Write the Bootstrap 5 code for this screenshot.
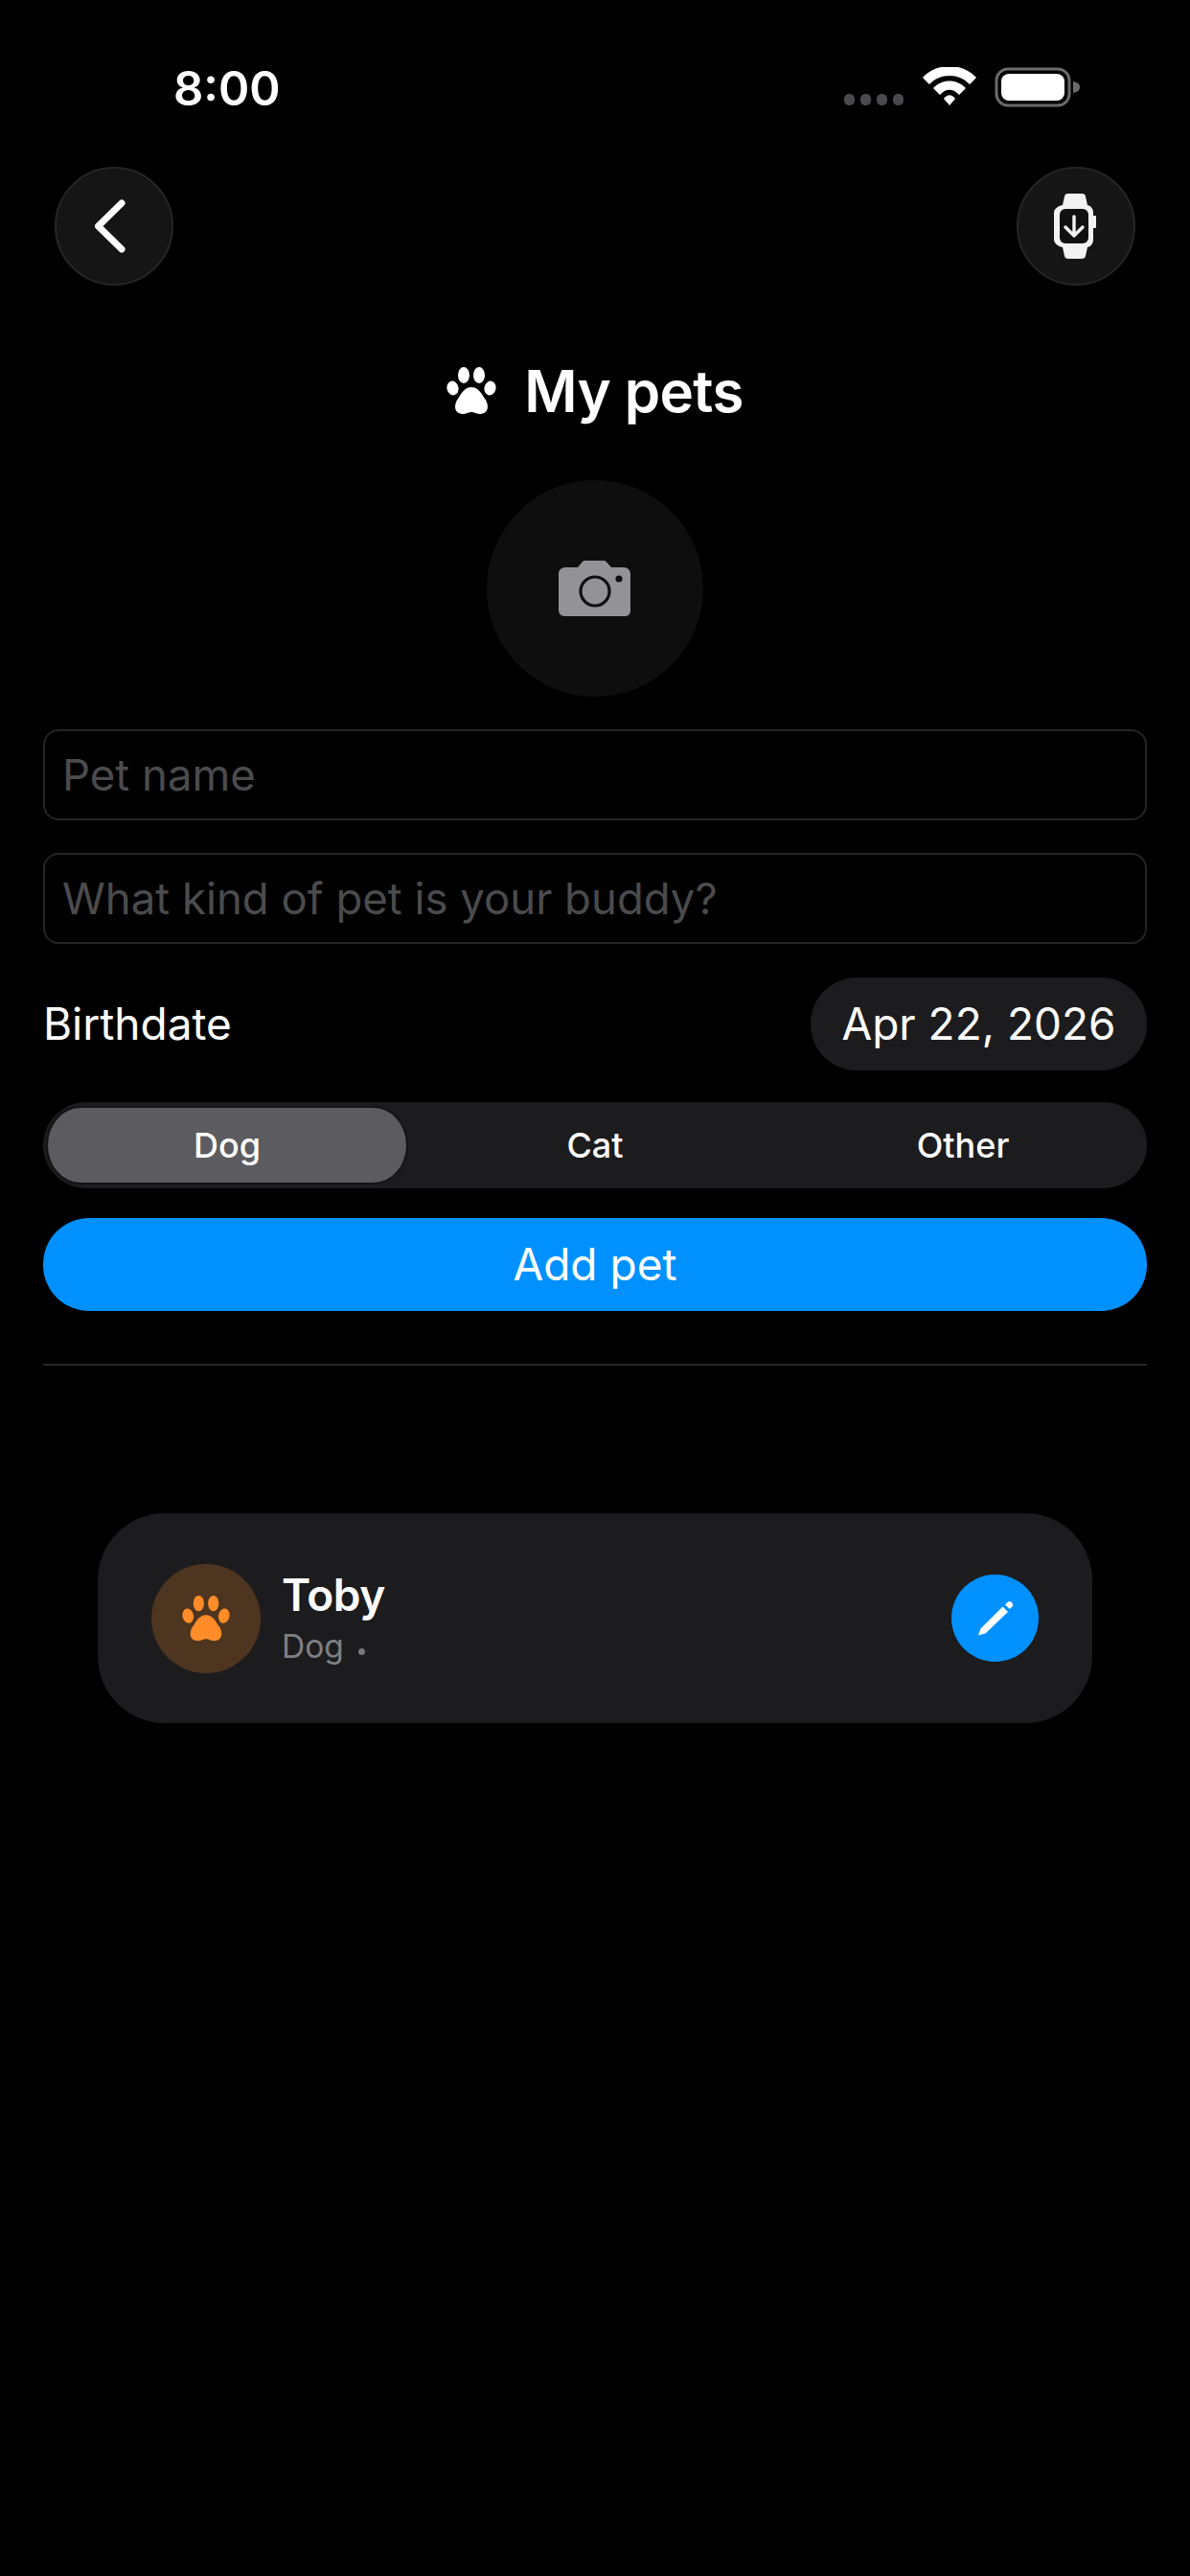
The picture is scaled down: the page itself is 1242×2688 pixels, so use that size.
<!DOCTYPE html>
<html lang="en">
<head>
  <meta charset="UTF-8" />
  <meta name="viewport" content="width=device-width, initial-scale=1.0">
  <title>My pets</title>
  <link href="https://cdn.jsdelivr.net/npm/bootstrap@5.3.0/dist/css/bootstrap.min.css" rel="stylesheet">
  <style>
    body {
      background-color: #000;
      color: #fff;
      font-family: Inter, "Liberation Sans", sans-serif;
      margin: 0;
    }
    .screen { width: 1242px; height: 2688px; overflow: hidden; }
    .status-row { height: 174px; padding: 70px 0 0 181px; }
    .status-time { font-size: 49px; font-weight: 600; line-height: 46px; width: 700px; }
    .batt-icon { margin-left: -83px; }
    .round-btn {
      width: 124px; height: 124px; padding: 0;
      background: #151516; border: 2px solid #262627;
    }
    .round-btn:hover { background: #151516; border-color: #262627; }
    .top-row { padding: 0 57px; height: 124px; }
    .title-row { margin-top: 75px; height: 70px; gap: 29px; }
    .title-text { font-size: 60px; font-weight: 600; line-height: 70px; letter-spacing: -.6px; margin: 0; }
    .photo-btn {
      width: 226px; height: 226px; margin: 58px auto 34px;
      background: #0e0e0f;
    }
    .form-area { padding: 0 45px; }
    .pet-input.form-control {
      height: 95px; background: #000; border: 2px solid #252526; border-radius: 16px;
      font-size: 45.5px; padding: 0 18px; color: #fff; box-shadow: none;
    }
    .pet-input::placeholder { color: #4b4b4d; opacity: 1; }
    .input-second { margin-top: 34px; }
    .birth-row { margin-top: 35px; height: 97px; }
    .birth-label { font-size: 46px; line-height: 97px; }
    .date-pill {
      height: 97px; width: 351px; border-radius: 48px; background: #1c1c1e;
      color: #fff; font-size: 46px; padding: 0; border: 0;
    }
    .date-pill:hover { background: #1c1c1e; color: #fff; }
    .segment { margin-top: 33px; height: 90px; background: #1c1c1e; border-radius: 45px; padding: 6px 5px; }
    .segment-item {
      width: 374px; height: 78px; border-radius: 34px / 39px; border: 0; padding: 0;
      background: transparent; color: #fff; font-size: 36px; font-weight: 500;
    }
    .segment-item:hover { background: transparent; color: #fff; }
    .segment-item.picked, .segment-item.picked:hover { background: #5c5c60; box-shadow: 0 0 0 2px #141415; }
    .add-btn {
      margin-top: 31px; height: 97px; border-radius: 48px; border: 0; padding: 0;
      background: #0091ff; color: #fff; font-size: 46px;
    }
    .add-btn:hover { background: #0091ff; color: #fff; }
    .split-line { margin: 55px 0 0; border: 0; border-top: 2px solid #262627; opacity: 1; }
    .pet-card {
      margin: 154px 102px 0; height: 219px; border-radius: 70px; background: #1c1c1e;
      padding: 0 56px; border: 0; color: #fff;
    }
    .pet-avatar { width: 114px; height: 114px; background: #4e3520; }
    .pet-name { font-size: 46px; font-weight: 600; line-height: 50px; letter-spacing: -.5px; margin-left: -2px; }
    .pet-kind { font-size: 33.5px; line-height: 40px; color: #7f7f84; margin-top: 9px; margin-left: -2px; }
    .pet-dot { display: inline-block; width: 7px; height: 7px; border-radius: 50%; background: #77777b; margin-left: 6px; vertical-align: 3px; }
    .edit-btn { width: 91px; height: 91px; padding: 0; background: #0091ff; border: 0; }
    .edit-btn:hover { background: #0091ff; }
  </style>
</head>
<body>
<div class="screen">
  <div class="status-row d-flex align-items-start">
    <div class="status-time">8:00</div>
    <div class="d-flex align-items-start">
      <svg width="240" height="46" viewBox="0 0 240 46" xmlns="http://www.w3.org/2000/svg">
        <g fill="#4a4a4c">
          <rect x="0" y="28" width="11" height="12" rx="5"/>
          <rect x="17" y="28" width="11" height="12" rx="5"/>
          <rect x="34" y="28" width="11" height="12" rx="5"/>
          <rect x="51" y="28" width="11" height="12" rx="5"/>
        </g>
        <g fill="#fff">
          <path d="M82 11 C96 -5 124 -5 138 11 L131 18 C120 6 100 6 89 18 Z"/>
          <path d="M93 22 C102 12 118 12 127 22 L120 29 C114 22 106 22 100 29 Z"/>
          <path d="M104 33 C108 28 112 28 116 33 L110 40 Z"/>
        </g>
      </svg>
      <svg class="batt-icon" width="90" height="46" viewBox="0 0 90 46" xmlns="http://www.w3.org/2000/svg">
        <rect x="2" y="2" width="76" height="38" rx="12" fill="none" stroke="#6a6a6c" stroke-width="3"/>
        <rect x="7" y="7" width="66" height="28" rx="8" fill="#fff"/>
        <path d="M82 15 C87 16 89 18 89 21 C89 24 87 26 82 27 Z" fill="#6a6a6c"/>
      </svg>
    </div>
  </div>

  <div class="top-row d-flex justify-content-between align-items-center">
    <button class="btn round-btn rounded-circle d-flex align-items-center justify-content-center" type="button" aria-label="Back">
      <svg width="40" height="60" viewBox="0 0 40 60" xmlns="http://www.w3.org/2000/svg"><path d="M28 6 L3.5 30 L28 54" fill="none" stroke="#fff" stroke-width="7" stroke-linecap="round" stroke-linejoin="round"/></svg>
    </button>
    <button class="btn round-btn rounded-circle d-flex align-items-center justify-content-center" type="button" aria-label="Watch">
      <svg width="48" height="68" viewBox="0 0 48 68" xmlns="http://www.w3.org/2000/svg">
        <path d="M10 12 L12 3 C12 1 14 0 16 0 L30 0 C32 0 34 1 34 3 L36 12 C40 13 42 16 42 20 L42 23 L44 23 C45 23 45 24 45 25 L45 34 C45 35 45 36 44 36 L42 36 L42 48 C42 52 40 55 36 56 L34 65 C34 67 32 68 30 68 L16 68 C14 68 12 67 12 65 L10 56 C5 55 1 52 1 48 L1 20 C1 16 5 13 10 12 Z" fill="#f2f2f2"/>
        <rect x="7" y="16" width="30" height="36" rx="6" fill="#111"/>
        <path d="M22 24 L22 44 M13 35 L22 44 L31 35" fill="none" stroke="#f2f2f2" stroke-width="3.4" stroke-linecap="round" stroke-linejoin="round"/>
      </svg>
    </button>
  </div>

  <div class="title-row d-flex justify-content-center align-items-center">
    <svg width="52" height="50" viewBox="0 0 52 50" xmlns="http://www.w3.org/2000/svg" fill="#fff">
      <ellipse cx="6.5" cy="22" rx="6" ry="7.5" transform="rotate(-12 6.5 22)"/>
      <ellipse cx="18" cy="8.5" rx="6" ry="8.5"/>
      <ellipse cx="34" cy="8.5" rx="6" ry="8.5"/>
      <ellipse cx="45.5" cy="22" rx="6" ry="7.5" transform="rotate(12 45.5 22)"/>
      <path d="M26 21 C33 21 36 27 40 33 C44 38 45 48 36 49 C32 49.5 29 47 26 47 C23 47 20 49.5 16 49 C7 48 8 38 12 33 C16 27 19 21 26 21 Z"/>
    </svg>
    <h1 class="title-text">My pets</h1>
  </div>

  <button class="btn photo-btn rounded-circle d-flex align-items-center justify-content-center" type="button" aria-label="Add photo">
    <svg width="76" height="58" viewBox="0 0 76 58" xmlns="http://www.w3.org/2000/svg">
      <path d="M7 7 L20 7 L25 1 C25.6 .4 26.5 0 27.5 0 L47 0 C48 0 49 .4 49.6 1 L55 7 L68 7 C72 7 75 10 75 14 L75 52 C75 55 73 58 70 58 L6 58 C3 58 0 55 0 52 L0 14 C0 10 3 7 7 7 Z" fill="#929297"/>
      <circle cx="38" cy="32" r="15" fill="none" stroke="#101012" stroke-width="3.2"/>
      <circle cx="63" cy="19" r="3.6" fill="#101012"/>
    </svg>
  </button>

  <div class="form-area">
    <input class="form-control pet-input" type="text" placeholder="Pet name">
    <input class="form-control pet-input input-second" type="text" placeholder="What kind of pet is your buddy?">

    <div class="birth-row d-flex justify-content-between align-items-center">
      <span class="birth-label">Birthdate</span>
      <button class="btn date-pill" type="button">Apr 22, 2026</button>
    </div>

    <div class="segment d-flex justify-content-between">
      <button class="btn segment-item picked" type="button">Dog</button>
      <button class="btn segment-item" type="button">Cat</button>
      <button class="btn segment-item" type="button">Other</button>
    </div>

    <button class="btn add-btn w-100 d-block" type="button">Add pet</button>
    <hr class="split-line">
  </div>

  <div class="pet-card d-flex align-items-center">
    <div class="pet-avatar rounded-circle d-flex align-items-center justify-content-center flex-shrink-0">
      <svg width="50" height="50" viewBox="0 0 52 50" xmlns="http://www.w3.org/2000/svg" fill="#ff8c28">
        <ellipse cx="6.5" cy="22" rx="6" ry="8" transform="rotate(-12 6.5 22)"/>
        <ellipse cx="18" cy="8.5" rx="5.8" ry="8.5"/>
        <ellipse cx="34" cy="8.5" rx="5.8" ry="8.5"/>
        <ellipse cx="45.5" cy="22" rx="6" ry="8" transform="rotate(12 45.5 22)"/>
        <path d="M26 21 C33 21 36 27 40 33 C44 38 45 48 36 49 C32 49.5 29 47 26 47 C23 47 20 49.5 16 49 C7 48 8 38 12 33 C16 27 19 21 26 21 Z"/>
      </svg>
    </div>
    <div class="ms-4 flex-grow-1">
      <div class="pet-name">Toby</div>
      <div class="pet-kind">Dog <span class="pet-dot"></span></div>
    </div>
    <button class="btn edit-btn rounded-circle d-flex align-items-center justify-content-center flex-shrink-0" type="button" aria-label="Edit">
      <svg width="40" height="40" viewBox="0 0 40 40" xmlns="http://www.w3.org/2000/svg" fill="#fff">
        <path d="M2 37.5 L4.5 30.5 L27.5 7.5 L33 13 L9.5 35.5 Z"/>
        <path d="M30 5.5 L32.5 3 C33.8 1.800 35.500 1.800 36.700 3 L37.200 3.500 C38.400 4.800 38.400 6.500 37.200 7.700 L34.800 10 Z"/>
      </svg>
    </button>
  </div>
</div>
<script src="https://cdn.jsdelivr.net/npm/bootstrap@5.3.0/dist/js/bootstrap.bundle.min.js"></script>
</body>
</html>
